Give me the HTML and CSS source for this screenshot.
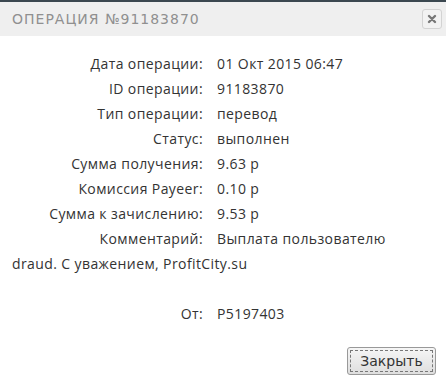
FILE: index.html
```
<!DOCTYPE html>
<html lang="ru">
<head>
    <meta charset="UTF-8">
    <title>Операция №91183870</title>
    <link rel="stylesheet" href="styles.css">
</head>
<body>
<div class="dialog">
    <div class="dialog-title">
        <span class="title-text">Операция №91183870</span>
        <button class="close-btn" type="button" title="Закрыть">
            <svg width="10" height="10" viewBox="0 0 10 10">
                <path d="M2 2 L8 8 M8 2 L2 8" stroke="#777" stroke-width="2.4" stroke-linecap="round"/>
            </svg>
        </button>
    </div>
    <div class="dialog-body">
        <div class="row"><span class="label">Дата операции:</span>01 Окт 2015 06:47</div>
        <div class="row"><span class="label">ID операции:</span>91183870</div>
        <div class="row"><span class="label">Тип операции:</span>перевод</div>
        <div class="row"><span class="label">Статус:</span>выполнен</div>
        <div class="row"><span class="label">Сумма получения:</span>9.63 р</div>
        <div class="row"><span class="label">Комиссия Payeer:</span>0.10 р</div>
        <div class="row"><span class="label">Сумма к зачислению:</span>9.53 р</div>
        <div class="row"><span class="label">Комментарий:</span>Выплата пользователю draud. С уважением, ProfitCity.su</div>
        <div class="row from"><span class="label">От:</span>P5197403</div>
    </div>
    <div class="dialog-buttons">
        <button type="button" class="btn">Закрыть</button>
    </div>
</div>
</body>
</html>
```

FILE: styles.css
```
body {
    margin: 0;
    background: #fff;
    font-family: "Open Sans", Arial, sans-serif;
}

.dialog {
    width: 446px;
    height: 386px;
    border-top: 2px solid #3b4850;
    box-sizing: border-box;
    background: #fff;
}

.dialog-title {
    height: 34px;
    background: #efefef;
    display: flex;
    align-items: center;
    justify-content: space-between;
    padding: 0 4px 0 12px;
}

.title-text {
    font-family: "DejaVu Sans", sans-serif;
    text-transform: uppercase;
    font-size: 14px;
    letter-spacing: 1px;
    color: #909090;
}

.close-btn {
    width: 20px;
    height: 20px;
    padding: 0;
    border: 1px solid #d3d3d3;
    border-radius: 3px;
    background: #f2f2f2;
    display: flex;
    align-items: center;
    justify-content: center;
}

.dialog-body {
    padding: 15px 40px 0 12px;
    font-size: 14px;
    letter-spacing: 0.4px;
    line-height: 25px;
    color: #333;
}

.label {
    display: inline-block;
    width: 191px;
    margin-right: 14px;
    text-align: right;
}

.from {
    margin-top: 25px;
}

.dialog-buttons {
    display: flex;
    justify-content: flex-end;
    padding: 21px 10px 0 0;
}

.btn {
    width: 89px;
    height: 28px;
    font-family: "DejaVu Sans", Verdana, sans-serif;
    font-size: 14px;
    color: #333;
    border: 1px solid #999;
    border-radius: 3px;
    background: linear-gradient(#f6f6f6, #dedede);
    outline: 1px dashed #777;
    outline-offset: -4px;
    cursor: pointer;
}
```
